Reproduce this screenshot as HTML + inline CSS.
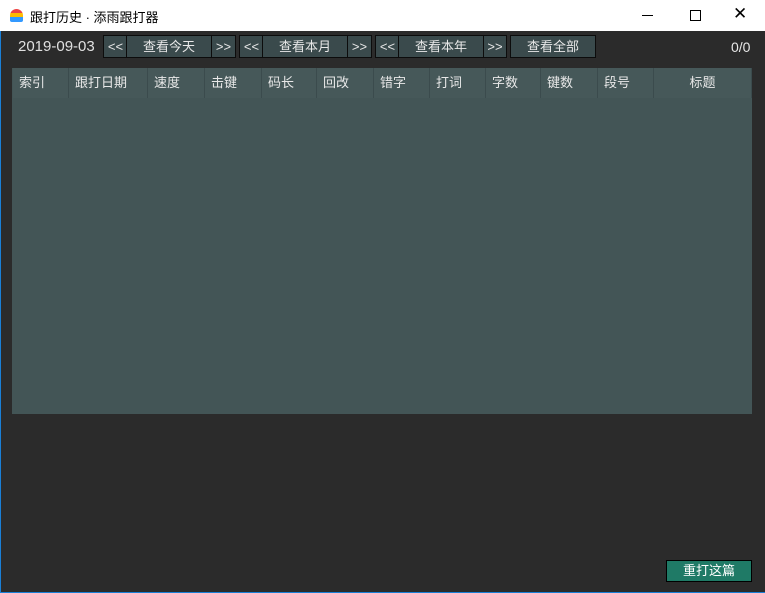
<!DOCTYPE html><html><head><meta charset="utf-8"><style>
body{margin:0;width:765px;height:593px;overflow:hidden;font-family:"Liberation Sans","Microsoft YaHei","Noto Sans CJK SC",sans-serif;font-size:13px;position:relative;background:#2b2b2b}
.t{position:absolute;left:0;top:0;width:765px;height:31px;background:#fff;color:#000}
.fr{position:absolute;left:0;top:31px;width:764px;height:561px;border-right:1px solid #1a7fd6;border-bottom:1px solid #1a7fd6;background:#2b2b2b;border-left:1px solid #1a7fd6}
.b{position:absolute;top:35px;height:21px;background:#3a4a4c;border:1px solid #0c0c0c;color:#e8e8e8;text-align:center;line-height:21px;box-sizing:content-box}
.tb{position:absolute;left:12px;top:68px;width:740px;height:346px;background:#435556}
.h{position:absolute;top:68px;height:30px;line-height:30px;color:#e8e8e8;padding-left:6px;box-sizing:border-box;border-right:1px solid #3b4b4d;background:#465859}
</style></head><body>
<div class="t">
<div style="position:absolute;left:10px;top:9px;width:13px;height:13px;border-radius:7px 7px 2px 2px;background:linear-gradient(#e44 0,#e44 30%,#fb0 30%,#fb0 60%,#39f 60%)"></div>
<div style="position:absolute;left:30px;top:7px;font-size:13px">跟打历史 · 添雨跟打器</div>
<div style="position:absolute;left:642px;top:15px;width:11px;height:1px;background:#000"></div>
<div style="position:absolute;left:690px;top:10px;width:9px;height:9px;border:1px solid #000"></div>
<div style="position:absolute;left:733px;top:4px;font-size:17px;font-weight:300">✕</div>
</div>
<div class="fr"></div>
<div style="position:absolute;left:18px;top:38px;color:#e0e0e0;font-size:15px">2019-09-03</div>
<div class="b" style="left:103px;width:23px">&lt;&lt;</div>
<div class="b" style="left:126px;width:84px">查看今天</div>
<div class="b" style="left:211px;width:23px">&gt;&gt;</div>
<div class="b" style="left:239px;width:23px">&lt;&lt;</div>
<div class="b" style="left:262px;width:84px">查看本月</div>
<div class="b" style="left:347px;width:23px">&gt;&gt;</div>
<div class="b" style="left:375px;width:23px">&lt;&lt;</div>
<div class="b" style="left:398px;width:84px">查看本年</div>
<div class="b" style="left:483px;width:22px">&gt;&gt;</div>
<div class="b" style="left:510px;width:84px">查看全部</div>
<div style="position:absolute;left:731px;top:39px;color:#e8e8e8;font-size:14px">0/0</div>
<div class="tb"></div>
<div class="h" style="left:13px;width:56px">索引</div>
<div class="h" style="left:69px;width:79px">跟打日期</div>
<div class="h" style="left:148px;width:57px">速度</div>
<div class="h" style="left:205px;width:57px">击键</div>
<div class="h" style="left:262px;width:55px">码长</div>
<div class="h" style="left:317px;width:57px">回改</div>
<div class="h" style="left:374px;width:56px">错字</div>
<div class="h" style="left:430px;width:56px">打词</div>
<div class="h" style="left:486px;width:55px">字数</div>
<div class="h" style="left:541px;width:57px">键数</div>
<div class="h" style="left:598px;width:56px">段号</div>
<div class="h" style="left:654px;width:98px;text-align:center;padding:0">标题</div>
<div style="position:absolute;left:666px;top:560px;width:84px;height:20px;background:#1f7a66;border:1px solid #000;color:#fff;text-align:center;line-height:20px">重打这篇</div>
</body></html>
